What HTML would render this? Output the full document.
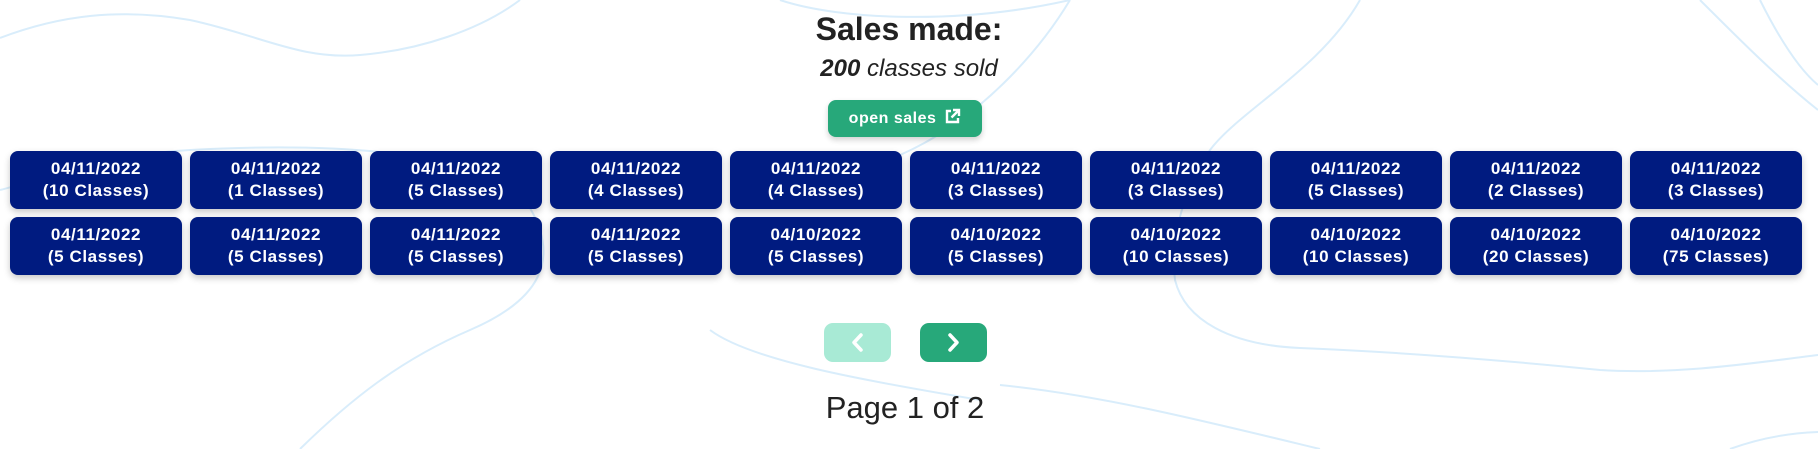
<!DOCTYPE html>
<html><head><meta charset="utf-8"><style>
html,body{margin:0;padding:0;}
body{width:1818px;height:449px;overflow:hidden;background:#fff;position:relative;font-family:"Liberation Sans",Arial,sans-serif;}
svg.bg{position:absolute;left:0;top:0;}
.t{position:absolute;left:0;width:1818px;text-align:center;color:#222;}
.h{top:11px;font-size:32px;font-weight:bold;}
.s{top:55px;font-size:24px;font-style:italic;}
.btn{position:absolute;left:828px;top:100px;width:154px;height:37px;background:#27a87a;border-radius:8px;color:#fff;font-weight:bold;font-size:16px;letter-spacing:0.5px;line-height:37px;text-align:center;box-shadow:0 3px 6px rgba(0,0,0,.18);}
.card{position:absolute;width:172px;height:58px;background:#001b80;border-radius:8px;color:#fff;font-weight:bold;font-size:17px;letter-spacing:0.6px;line-height:21.5px;text-align:center;box-shadow:0 3px 7px rgba(0,0,0,.22);box-sizing:border-box;padding-top:7px;}
.pg{position:absolute;top:323px;width:67px;height:39px;border-radius:9px;}
</style></head><body>
<svg class="bg" width="1818" height="449" fill="none" stroke="#d9edfb" stroke-width="2">
<path d="M0 38 C60 15 120 8 190 20 C260 35 300 60 360 55 C420 50 480 30 520 0"/>
<path d="M0 190 C40 180 100 155 190 150 C280 145 340 148 380 152"/>
<path d="M530 208 C560 260 540 300 470 330 C400 360 350 400 300 449"/>
<path d="M780 0 C840 20 960 25 1070 0"/>
<path d="M1070 0 C1040 50 980 120 900 155"/>
<path d="M1360 0 C1320 70 1240 110 1210 150 C1180 200 1170 240 1175 280 C1185 320 1230 345 1300 348 C1400 352 1500 360 1600 370 C1680 375 1760 362 1818 355"/>
<path d="M1700 0 C1740 40 1780 80 1818 110"/>
<path d="M1760 0 C1780 40 1800 70 1818 85"/>
<path d="M1000 385 C1100 395 1200 420 1320 449"/>
<path d="M710 330 C750 360 860 380 980 400"/>
<path d="M1730 449 C1760 438 1790 433 1818 432"/>
</svg>
<div class="t h">Sales made:</div>
<div class="t s"><b>200</b> classes sold</div>
<div class="btn">open sales <svg width="17" height="17" viewBox="0 0 17 17" style="vertical-align:-2px;margin-left:3px" fill="none" stroke="#fff" stroke-width="2.4"><path d="M7 3H3v11h11v-4"/><path d="M9 2h6v6M15 2L7.5 9.5"/></svg></div>

<div class="card" style="left:10px;top:151px">04/11/2022<br>(10 Classes)</div>
<div class="card" style="left:190px;top:151px">04/11/2022<br>(1 Classes)</div>
<div class="card" style="left:370px;top:151px">04/11/2022<br>(5 Classes)</div>
<div class="card" style="left:550px;top:151px">04/11/2022<br>(4 Classes)</div>
<div class="card" style="left:730px;top:151px">04/11/2022<br>(4 Classes)</div>
<div class="card" style="left:910px;top:151px">04/11/2022<br>(3 Classes)</div>
<div class="card" style="left:1090px;top:151px">04/11/2022<br>(3 Classes)</div>
<div class="card" style="left:1270px;top:151px">04/11/2022<br>(5 Classes)</div>
<div class="card" style="left:1450px;top:151px">04/11/2022<br>(2 Classes)</div>
<div class="card" style="left:1630px;top:151px">04/11/2022<br>(3 Classes)</div>

<div class="card" style="left:10px;top:217px">04/11/2022<br>(5 Classes)</div>
<div class="card" style="left:190px;top:217px">04/11/2022<br>(5 Classes)</div>
<div class="card" style="left:370px;top:217px">04/11/2022<br>(5 Classes)</div>
<div class="card" style="left:550px;top:217px">04/11/2022<br>(5 Classes)</div>
<div class="card" style="left:730px;top:217px">04/10/2022<br>(5 Classes)</div>
<div class="card" style="left:910px;top:217px">04/10/2022<br>(5 Classes)</div>
<div class="card" style="left:1090px;top:217px">04/10/2022<br>(10 Classes)</div>
<div class="card" style="left:1270px;top:217px">04/10/2022<br>(10 Classes)</div>
<div class="card" style="left:1450px;top:217px">04/10/2022<br>(20 Classes)</div>
<div class="card" style="left:1630px;top:217px">04/10/2022<br>(75 Classes)</div>

<div class="pg" style="left:824px;background:#a8ead5"><svg width="67" height="39" fill="none" stroke="#fff" stroke-width="3.5" stroke-linecap="round" stroke-linejoin="round"><path d="M37 12L30 19.5L37 27"/></svg></div>
<div class="pg" style="left:920px;background:#27a87a"><svg width="67" height="39" fill="none" stroke="#fff" stroke-width="3.5" stroke-linecap="round" stroke-linejoin="round"><path d="M30 12L37 19.5L30 27"/></svg></div>
<div class="t" style="top:390px;font-size:31px;left:-4px">Page 1 of 2</div>
</body></html>
